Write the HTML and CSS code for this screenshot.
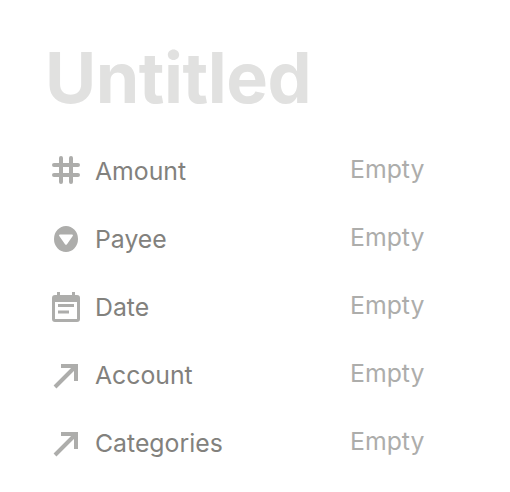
FILE: index.html
```html
<!DOCTYPE html>
<html lang="en">
<head>
<meta charset="utf-8">
<title>Untitled</title>
<link rel="stylesheet" href="styles.css">
</head>
<body>
<main class="page">
<h1 class="title">Untitled</h1>
<section class="properties">
<div class="row"><svg class="icon" viewBox="0 0 28 28"><path class="hash" d="M9 2v24M19 2v24M2 9h24M2 19h24"/></svg><span class="label">Amount</span><span class="value">Empty</span></div>
<div class="row"><svg class="icon" viewBox="0 0 28 28"><path class="fill" fill-rule="evenodd" d="M14 2a12 13 0 1 0 0 26a12 13 0 1 0 0-26M8 10.5h12q1.7 0 .7 1.5l-5.7 8.2q-1 1.3-2 0l-5.7-8.2q-1-1.5.7-1.5z"/></svg><span class="label">Payee</span><span class="value">Empty</span></div>
<div class="row"><svg class="icon" viewBox="0 0 28 28"><path class="fill" fill-rule="evenodd" d="M5 0h3v3h12v-3h3v3h2q3 0 3 3v21q0 3-3 3H3q-3 0-3-3V6q0-3 3-3h2zM3 10v17h22V10zM6 12h16v3H6zM6 18.5h11v3H6z"/></svg><span class="label">Date</span><span class="value">Empty</span></div>
<div class="row"><svg class="icon" viewBox="0 0 28 28"><path class="arrow" d="M9 6h15v15M24 6L3 27"/></svg><span class="label">Account</span><span class="value">Empty</span></div>
<div class="row"><svg class="icon" viewBox="0 0 28 28"><path class="arrow" d="M9 6h15v15M24 6L3 27"/></svg><span class="label">Categories</span><span class="value">Empty</span></div>
</section>
</main>
</body>
</html>
```

FILE: styles.css
```css
body { margin: 0; background: #fff; font-family: Inter, sans-serif; }
.page { padding: 28px 52px; }
.title { margin: 0 0 9px -7px; height: 99px; line-height: 99px; font-size: 70px; font-weight: 700; letter-spacing: -.5px; color: #e1e1e0; }
.row { display: grid; grid-template-columns: 28px 240px 1fr; column-gap: 15px; align-items: center; height: 68px; font-size: 24.8px; line-height: 32px; }
.icon { width: 28px; height: 28px; overflow: visible; }
.fill { fill: #adadab; }
.hash { fill: none; stroke: #adadab; stroke-width: 4; stroke-linecap: round; }
.arrow { fill: none; stroke: #adadab; stroke-width: 4; }
.label { padding-top: 2px; color: #82817d; }
.value { padding-bottom: 2px; color: #adadab; }
```
